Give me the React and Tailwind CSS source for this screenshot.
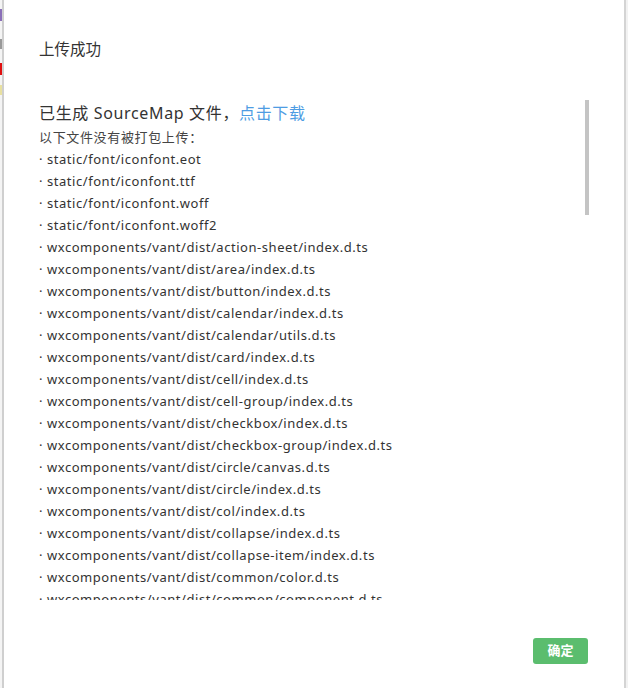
import React from "react";

const files = [
  "static/font/iconfont.eot",
  "static/font/iconfont.ttf",
  "static/font/iconfont.woff",
  "static/font/iconfont.woff2",
  "wxcomponents/vant/dist/action-sheet/index.d.ts",
  "wxcomponents/vant/dist/area/index.d.ts",
  "wxcomponents/vant/dist/button/index.d.ts",
  "wxcomponents/vant/dist/calendar/index.d.ts",
  "wxcomponents/vant/dist/calendar/utils.d.ts",
  "wxcomponents/vant/dist/card/index.d.ts",
  "wxcomponents/vant/dist/cell/index.d.ts",
  "wxcomponents/vant/dist/cell-group/index.d.ts",
  "wxcomponents/vant/dist/checkbox/index.d.ts",
  "wxcomponents/vant/dist/checkbox-group/index.d.ts",
  "wxcomponents/vant/dist/circle/canvas.d.ts",
  "wxcomponents/vant/dist/circle/index.d.ts",
  "wxcomponents/vant/dist/col/index.d.ts",
  "wxcomponents/vant/dist/collapse/index.d.ts",
  "wxcomponents/vant/dist/collapse-item/index.d.ts",
  "wxcomponents/vant/dist/common/color.d.ts",
  "wxcomponents/vant/dist/common/component.d.ts",
];

export default function App() {
  return (
    <div
      className="flex h-[688px] w-[628px] overflow-hidden bg-[#dcdcdc]"
      style={{ fontFamily: '"Noto Sans", "Noto Sans CJK SC", sans-serif' }}
    >
      <div className="flex w-[2px] flex-col bg-[#f4f4f4]">
        <div className="mt-[9px] h-[12px] bg-[#8a6fb8]" />
        <div className="mt-[18px] h-[10px] bg-[#999]" />
        <div className="mt-[14px] h-[12px] bg-[#e01010]" />
        <div className="mt-[10px] h-[10px] bg-[#e8e0a0]" />
      </div>
      <div className="w-[2px] bg-[#cfcfcf]" />
      <div className="flex w-[622px] flex-col bg-white text-[#333]">
        <div className="pl-[35px] pt-[38px] text-[15.5px] leading-[22px]">上传成功</div>
        <div className="relative ml-[35px] mt-[40px] h-[500px] w-[550px] overflow-hidden">
          <div className="text-[16px] leading-[26px] tracking-[0.65px]">
            已生成 SourceMap 文件，<span className="text-[#4e9ce3]">点击下载</span>
          </div>
          <div className="text-[13px] leading-[22px] tracking-[0.65px] text-[#444]">以下文件没有被打包上传：</div>
          {files.map((f) => (
            <div key={f} className="whitespace-nowrap text-[13px] leading-[22px] tracking-[0.55px] text-[#333]">
              · {f}
            </div>
          ))}
          <div className="absolute right-0 top-0 h-[115px] w-[4px] bg-[#c4c4c4]" />
        </div>
        <div className="flex justify-end pr-[36px] pt-[38px]">
          <button className="h-[26px] w-[55px] rounded-[3px] bg-[#5bbd6e] text-[13px] font-bold text-white">
            确定
          </button>
        </div>
      </div>
      <div className="w-[2px] bg-[#d4d4d4]" />
      <div className="w-[2px] bg-[#f2f2f2]" />
    </div>
  );
}
